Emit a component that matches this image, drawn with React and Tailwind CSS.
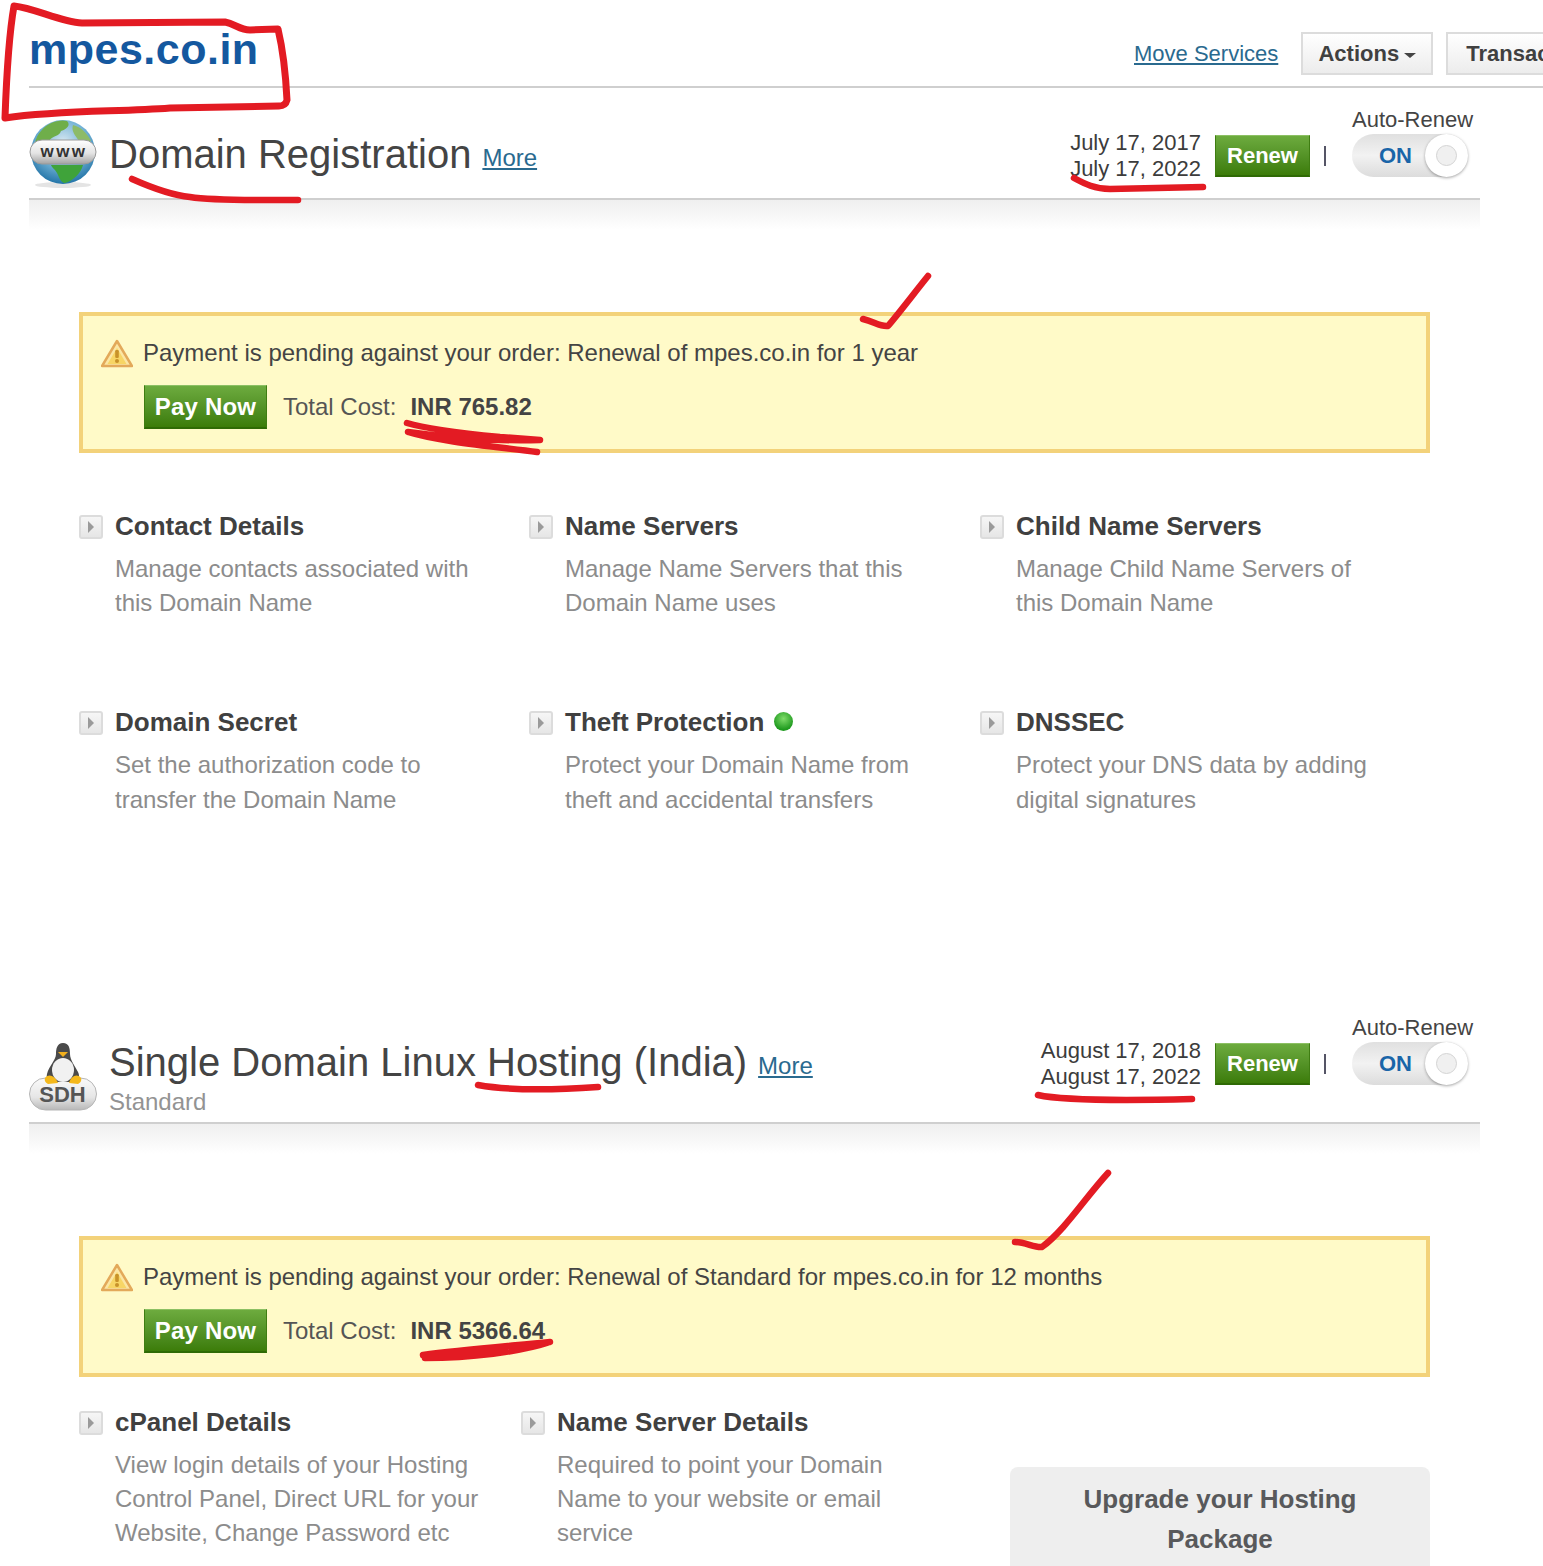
import React from "react";

function Globe() {
  return (
    <svg width="68" height="70" viewBox="0 0 68 70" className="shrink-0">
      <defs>
        <radialGradient id="ocean" cx="0.5" cy="0.35" r="0.7">
          <stop offset="0" stopColor="#d8e8f2" />
          <stop offset="0.55" stopColor="#6fb0d4" />
          <stop offset="1" stopColor="#15699f" />
        </radialGradient>
        <linearGradient id="pill" x1="0" y1="0" x2="0" y2="1">
          <stop offset="0" stopColor="#ffffff" />
          <stop offset="0.55" stopColor="#e4e4e4" />
          <stop offset="1" stopColor="#a3a3a3" />
        </linearGradient>
      </defs>
      <ellipse cx="34" cy="66" rx="28" ry="3" fill="#e4e4e4" />
      <circle cx="34" cy="33" r="32" fill="url(#ocean)" />
      <path d="M12 12 C18 4 30 0 38 2 C42 6 38 10 32 12 C30 18 24 16 20 22 L6 24 C7 19 9 15 12 12 Z" fill="#6fae4a" />
      <path d="M44 6 C52 8 58 14 62 22 L50 22 C46 16 42 12 44 6 Z" fill="#8dbb68" />
      <path d="M22 46 L54 46 C52 54 44 62 36 64 C32 64 30 58 28 54 C26 50 23 49 22 46 Z" fill="#3fa33a" />
      <rect x="1" y="21" width="66" height="24" rx="12" fill="url(#pill)" stroke="#9a9a9a" strokeWidth="1" />
      <text x="35" y="38" textAnchor="middle" fontFamily="'Liberation Sans', sans-serif" fontWeight="700" fontSize="17" fill="#333" letterSpacing="2.5">www</text>
    </svg>
  );
}

function Penguin() {
  return (
    <svg width="68" height="70" viewBox="0 0 68 70" className="shrink-0">
      <defs>
        <linearGradient id="pill2" x1="0" y1="0" x2="0" y2="1">
          <stop offset="0" stopColor="#fafafa" />
          <stop offset="0.6" stopColor="#e6e6e6" />
          <stop offset="1" stopColor="#b8b8b8" />
        </linearGradient>
      </defs>
      <rect x="0.5" y="36" width="67" height="32" rx="16" fill="url(#pill2)" stroke="#b5b5b5" strokeWidth="1" />
      <path d="M34 1 C28 1 27 7 27 12 C27 18 20 24 18 32 C17 36 19 39 22 40 L46 40 C50 38 51 34 49 30 C46 24 41 18 41 12 C41 6 40 1 34 1 Z" fill="#4a4a4a" />
      <ellipse cx="34" cy="28" rx="11" ry="12" fill="#f1f1f1" />
      <path d="M29 10 L39 10 L34 15 Z" fill="#f2b01e" />
      <path d="M16 36 C20 31 26 34 29 41 L19 42 C17 41 15 39 16 36 Z" fill="#f4b81c" />
      <path d="M40 41 C42 34 48 31 52 36 C53 39 51 41 49 42 Z" fill="#f4b81c" />
      <text x="33.5" y="60" textAnchor="middle" fontFamily="'Liberation Sans', sans-serif" fontWeight="700" fontSize="22" fill="#555">SDH</text>
    </svg>
  );
}

function Warn() {
  return (
    <svg width="32" height="29" viewBox="0 0 32 29" className="shrink-0">
      <path d="M16 2 L31 27 L1 27 Z" fill="#fbe6a4" stroke="#e3a95a" strokeWidth="2.5" strokeLinejoin="round" />
      <path d="M16 9 L25.5 25 L6.5 25 Z" fill="#f7d565" />
      <rect x="14.2" y="11" width="3.6" height="8" rx="1.2" fill="#c8922a" />
      <circle cx="16" cy="22" r="2" fill="#c8922a" />
    </svg>
  );
}

function Arrow() {
  return (
    <div className="w-6 h-6 shrink-0 mt-[5px] rounded-[3px] border-2 border-[#dcdcdc] bg-gradient-to-b from-[#f6f6f6] to-[#e6e6e6] flex items-center justify-center">
      <svg width="8" height="12" viewBox="0 0 8 12">
        <path d="M1 0 L7 6 L1 12 Z" fill="#9a9a9a" />
      </svg>
    </div>
  );
}

function GreenButton({ children, className }) {
  return (
    <div className={"flex items-center justify-center shrink-0 bg-gradient-to-b from-[#6dab3e] to-[#3c7c08] border border-[#3f7d12] border-t-[#8cc063] border-b-2 border-b-[#2f6a05] text-white font-bold " + className}>
      {children}
    </div>
  );
}

function Feature({ title, extra, lines, className, leading }) {
  return (
    <div className={"flex gap-3 " + (className || "")}>
      <Arrow />
      <div>
        <div className="flex items-center gap-[10px] h-8 text-[26px] font-bold text-[#404040] leading-8">
          <span>{title}</span>
          {extra}
        </div>
        <div className={"w-[370px] text-[24px] text-[#8c8c8c] " + (leading || "mt-[10px] leading-[34px]")}>{lines}</div>
      </div>
    </div>
  );
}

function Alert({ message, cost }) {
  return (
    <div className="ml-[50px] w-[1351px] h-[141px] box-border border-4 border-[#f3d27a] bg-[#fffac8] pl-[18px] pt-[22px]">
      <div className="flex items-center gap-[10px] h-[30px] text-[24px] text-[#444444]">
        <Warn />
        <span>{message}</span>
      </div>
      <div className="mt-[17px] ml-[43px] flex items-center h-11">
        <GreenButton className="w-[123px] h-11 text-[24px] tracking-[0.2px]">Pay Now</GreenButton>
        <span className="ml-[16px] text-[24px] text-[#555555]">Total Cost:</span>
        <span className="ml-[14px] text-[24px] font-bold text-[#444444]">{cost}</span>
      </div>
    </div>
  );
}

function ServiceHeader({ icon, iconMt, title, subtitle, start, end, height }) {
  return (
    <div className={"flex items-start border-b-2 border-[#cfcfcf] box-border " + height}>
      <div className={iconMt}>{icon}</div>
      <div className="ml-[12px] mt-[42px]">
        <div className="flex items-baseline gap-[11px] h-12 leading-[48px]">
          <span className="text-[40px] text-[#444444]">{title}</span>
          <a className="text-[24px] text-[#2a6a8f] underline -translate-y-[2px]">More</a>
        </div>
        {subtitle && <div className="text-[24px] leading-[30px] text-[#939393] mt-[1px]">{subtitle}</div>}
      </div>
      <div className="ml-auto flex items-start pr-[7px]">
        <div className="mt-[42px] text-right text-[22px] leading-[26px] text-[#3c3c3c]">
          <div>{start}</div>
          <div>{end}</div>
        </div>
        <GreenButton className="ml-[14px] mt-[47px] w-[95px] h-[42px] text-[22px]">Renew</GreenButton>
        <div className="ml-[14px] mt-[58px] w-[2px] h-[20px] bg-[#555566]" />
        <div className="ml-[26px] mt-[18px] w-[121px]">
          <div className="text-[22px] leading-[28px] text-[#444444] whitespace-nowrap">Auto-Renew</div>
          <div className="w-[116px] h-[43px] rounded-full bg-gradient-to-b from-[#e0e0e0] via-[#f2f2f2] to-[#dcdcdc] flex items-center justify-between">
            <span className="ml-[27px] text-[22px] font-bold text-[#1a65a8]">ON</span>
            <div className="w-[43px] h-[43px] rounded-full bg-white shadow-[0_1px_3px_rgba(0,0,0,0.35)] flex items-center justify-center">
              <div className="w-[21px] h-[21px] rounded-full border border-[#d4d4d4] bg-[#f0f0f0]" />
            </div>
          </div>
        </div>
      </div>
    </div>
  );
}

function Fade() {
  return <div className="h-[30px] bg-gradient-to-b from-[#efefef] to-white" />;
}

function Marks() {
  const strokes = [
    "M5 118 C6 90 8 40 14 6 C35 8 60 22 82 23 L225 22 C235 24 240 30 250 30 L278 29 C283 50 286 80 287 100 C286 104 283 106 279 106 L170 108 C120 112 60 110 5 118",
    "M132 179 C150 187 170 195 190 197 C215 201 260 200 298 200",
    "M1074 178 C1085 184 1095 189 1110 189 L1203 187",
    "M863 319 C875 322 880 327 888 326 C900 312 915 292 928 276",
    "M407 423 C430 430 470 434 500 437 L540 440 C500 441 450 438 408 432 C440 442 500 447 537 452",
    "M478 1085 C500 1089 540 1091 598 1087",
    "M1038 1095 C1060 1100 1110 1101 1192 1099",
    "M1015 1242 C1025 1242 1035 1248 1042 1247 C1065 1230 1085 1198 1108 1173",
    "M423 1355 C460 1350 510 1346 550 1342 C520 1352 470 1358 425 1358",
  ];
  return (
    <svg className="absolute left-0 top-0 pointer-events-none" width="1543" height="1566" fill="none">
      {strokes.map((d, i) => (
        <path key={i} d={d} stroke="#e31b23" strokeWidth={i === 0 ? 7 : 6.5} strokeLinecap="round" strokeLinejoin="round" />
      ))}
    </svg>
  );
}

export default function App() {
  return (
    <div className="relative w-[1543px] h-[1566px] overflow-hidden bg-white font-['Liberation_Sans',Arial,sans-serif]">
      <div className="ml-[29px] flex items-start h-[88px] box-border border-b-2 border-[#cfcfcf] w-[1514px]">
        <div className="w-[1105px] shrink-0 pt-[21px] text-[43px] leading-[56px] font-bold text-[#14589f] tracking-[0.5px]">mpes.co.in</div>
        <a className="mt-[39px] shrink-0 text-[22px] leading-[30px] text-[#2a6a8f] underline">Move Services</a>
        <div className="ml-[23px] mt-[32px] shrink-0 w-[132px] h-[43px] box-border border-2 border-[#dcdcdc] bg-gradient-to-b from-white to-[#ececec] flex items-center justify-center gap-[5px] text-[22px] font-bold text-[#404040]">
          Actions
          <span className="mt-[3px] w-0 h-0 border-x-[6px] border-x-transparent border-t-[5px] border-t-[#444444]" />
        </div>
        <div className="ml-[13px] mt-[32px] shrink-0 w-[140px] h-[43px] box-border border-2 border-[#dcdcdc] bg-gradient-to-b from-white to-[#ececec] pl-[18px] flex items-center text-[22px] font-bold text-[#404040] whitespace-nowrap">
          Transactions
        </div>
      </div>

      <div className="ml-[29px] w-[1451px]">
        <ServiceHeader
          icon={<Globe />}
          iconMt="mt-[31px]"
          title="Domain Registration"
          start="July 17, 2017"
          end="July 17, 2022"
          height="h-[112px]"
        />
        <Fade />
        <div className="mt-[82px]">
          <Alert message="Payment is pending against your order: Renewal of mpes.co.in for 1 year" cost="INR 765.82" />
        </div>
        <div className="ml-[50px] mt-[57px] grid grid-cols-[450px_451px_450px] auto-rows-[196px]">
          <Feature title="Contact Details" lines="Manage contacts associated with this Domain Name" />
          <Feature title="Name Servers" lines="Manage Name Servers that this Domain Name uses" />
          <Feature title="Child Name Servers" lines="Manage Child Name Servers of this Domain Name" />
          <Feature leading="mt-[9px] leading-[35px]" title="Domain Secret" lines="Set the authorization code to transfer the Domain Name" />
          <Feature
            leading="mt-[9px] leading-[35px]"
            title="Theft Protection"
            extra={<span className="-mt-[2px] w-[19px] h-[19px] rounded-full bg-[radial-gradient(circle_at_50%_35%,#7fdc6a,#1f9a1f_70%)]" />}
            lines="Protect your Domain Name from theft and accidental transfers"
          />
          <Feature leading="mt-[9px] leading-[35px]" title="DNSSEC" lines="Protect your DNS data by adding digital signatures" />
        </div>

        <div className="mt-[94px]">
          <ServiceHeader
            icon={<Penguin />}
            iconMt="mt-[46px]"
            title="Single Domain Linux Hosting (India)"
            subtitle="Standard"
            start="August 17, 2018"
            end="August 17, 2022"
            height="h-[128px]"
          />
        </div>
        <Fade />
        <div className="mt-[82px]">
          <Alert message="Payment is pending against your order: Renewal of Standard for mpes.co.in for 12 months" cost="INR 5366.64" />
        </div>
        <div className="ml-[50px] mt-[29px] flex items-start">
          <Feature className="w-[442px] shrink-0" title="cPanel Details" lines="View login details of your Hosting Control Panel, Direct URL for your Website, Change Password etc" />
          <Feature className="w-[489px] shrink-0" title="Name Server Details" lines="Required to point your Domain Name to your website or email service" />
          <div className="mt-[61px] w-[420px] h-[130px] shrink-0 rounded-t-[8px] bg-[#eeeeee] pt-3 text-center text-[26px] leading-10 font-bold text-[#58595b]">
            Upgrade your Hosting
            <br />
            Package
          </div>
        </div>
      </div>
      <Marks />
    </div>
  );
}
